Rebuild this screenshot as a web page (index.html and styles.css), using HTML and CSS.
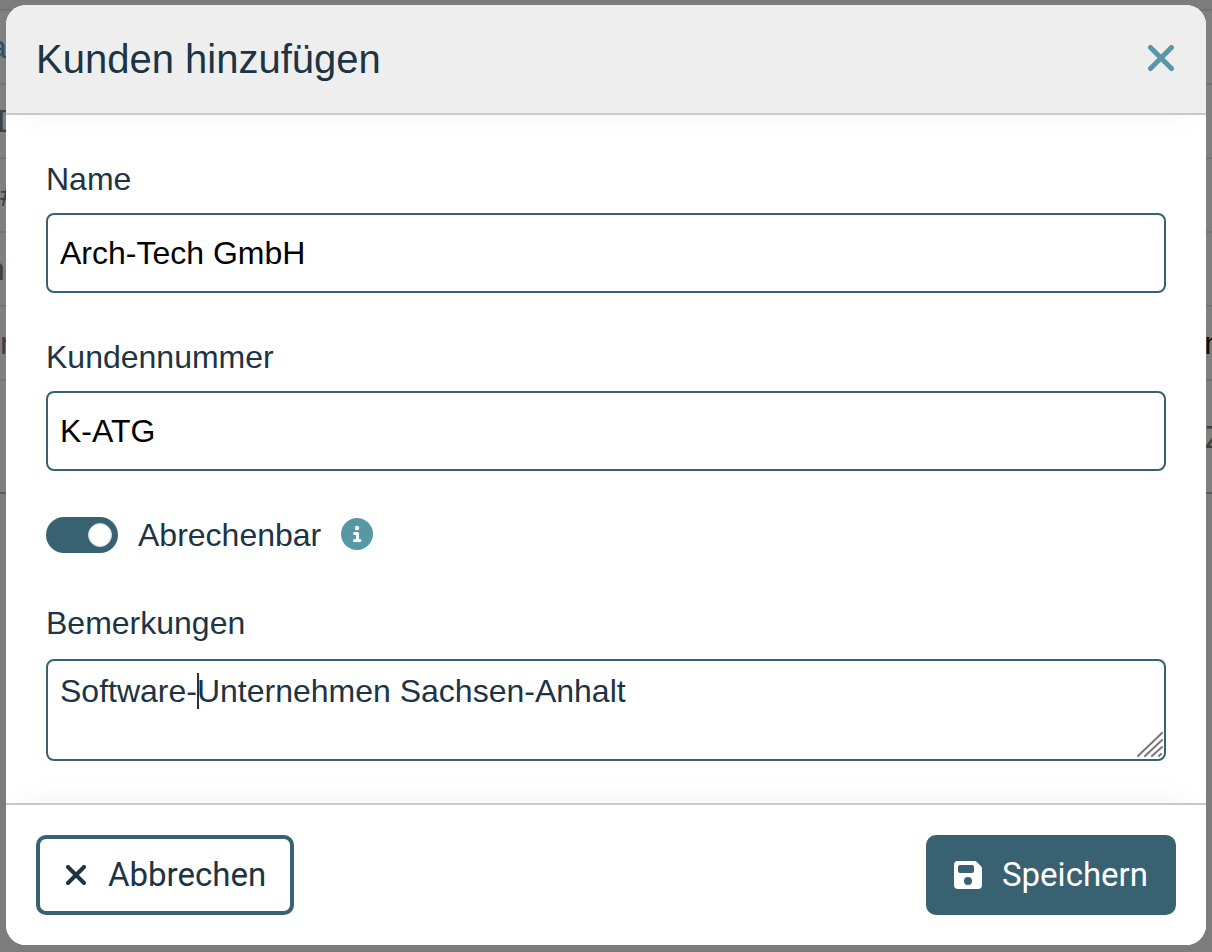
FILE: index.html
```html
<!DOCTYPE html>
<html lang="de">
<head>
<meta charset="utf-8">
<title>Kunden hinzufügen</title>
<link rel="stylesheet" href="styles.css">
</head>
<body>
<div class="page" aria-hidden="true">
  <div class="row row-accent"><span>a</span></div>
  <div class="row row-wide"><span>D</span></div>
  <div class="row"><span>#</span></div>
  <div class="row row-cut"><span>n</span></div>
  <div class="row row-dark"><span class="muted">r</span><span>n</span></div>
  <div class="row row-last"><span></span><span>Ze</span></div>
</div>
<div class="overlay">
  <form class="dialog" role="dialog" aria-labelledby="dialog-title">
    <header class="dialog-header">
      <h1 class="dialog-title" id="dialog-title">Kunden hinzufügen</h1>
      <button class="close" type="button" aria-label="Schließen">
        <svg class="close-icon" viewBox="0 0 30 30"><path d="M4.500 3.500 25.500 24.500M25.500 3.500 4.500 24.500"/></svg>
      </button>
    </header>
    <div class="dialog-body">
      <div class="field">
        <label for="name">Name</label>
        <input class="control" id="name" type="text" value="Arch-Tech GmbH">
      </div>
      <div class="field">
        <label for="number">Kundennummer</label>
        <input class="control" id="number" type="text" value="K-ATG">
      </div>
      <div class="switch-row">
        <input class="switch" id="billable" type="checkbox" role="switch" checked>
        <label for="billable">Abrechenbar</label>
        <svg class="info" viewBox="0 0 32 34" role="img" aria-label="Info"><circle cx="16" cy="16" r="16" fill="#5898a6"/><circle cx="16" cy="10" r="2.200" fill="#fff"/><path d="M13.500 15.500h3v7M13.500 22.500h5.500" fill="none" stroke="#fff" stroke-width="3" stroke-linecap="round" stroke-linejoin="round"/></svg>
      </div>
      <div class="field field-notes">
        <label for="notes">Bemerkungen</label>
        <div class="notes">
          <textarea class="control notes-text" id="notes">Software-Unternehmen Sachsen-Anhalt</textarea>
          <span class="caret"></span>
          <svg class="grip" viewBox="0 0 26 26"><path d="M1 24 25 1M8 24 25 8M15 24 25 15M22 24 24 22"/></svg>
        </div>
      </div>
    </div>
    <footer class="dialog-footer">
      <button class="button button-outline" type="button">
        <svg class="cancel-icon" viewBox="0 0 20 20"><path d="M2 2 18 18M18 2 2 18"/></svg>
        Abbrechen
      </button>
      <button class="button button-primary" type="submit">
        <svg class="save-icon" viewBox="0 0 28 28"><path fill="#fff" fill-rule="evenodd" d="M4 0h16.300a4 4 0 0 1 2.800 1.200l3.700 3.700A4 4 0 0 1 28 7.700V24a4 4 0 0 1-4 4H4a4 4 0 0 1-4-4V4a4 4 0 0 1 4-4ZM6 4a2 2 0 0 0-2 2v4a2 2 0 0 0 2 2h12a2 2 0 0 0 2-2V6a2 2 0 0 0-2-2ZM14 16a4 4 0 1 0 0 8 4 4 0 0 0 0-8Z"/></svg>
        Speichern
      </button>
    </footer>
  </form>
</div>
</body>
</html>
```
FILE: styles.css
```css
*,
*::before {
  box-sizing: border-box;
}

body {
  margin: 0;
  min-height: 100vh;
  background: #7c7c7c;
  color: #1c3444;
  font: 32px/36px "Liberation Sans", Arial, sans-serif;
}

.page {
  position: absolute;
  inset: 0;
  padding-top: 9px;
  overflow: hidden;
}

.row {
  display: flex;
  justify-content: space-between;
  align-items: center;
  height: 74px;
  border-top: 2px solid #737373;
  background: #808080;
  color: #3f3f3f;
}

.row-accent {
  color: #2c5360;
  margin-left: -11px;
}

.row-wide {
  margin-left: -3px;
}

.row-cut {
  margin-left: -13px;
}

.row-dark {
  color: #111;
  margin-right: -10px;
}

.muted {
  color: #3f3f3f;
}

.row-last {
  height: 115px;
  border-bottom: 2px solid #5c5c5c;
  margin-right: -30px;
}

.overlay {
  position: relative;
  display: flex;
  min-height: 100vh;
  padding: 5px 6px 7px;
}

.dialog {
  display: flex;
  flex-direction: column;
  flex: 1;
  overflow: hidden;
  border-radius: 20px;
  background: #fff;
}

.dialog-header,
.dialog-footer {
  position: relative;
  display: flex;
  align-items: center;
  justify-content: space-between;
  padding: 30px;
}

.dialog-header {
  border-bottom: 2px solid #c8c8c8;
  background: #eee;
  box-shadow: 0 20px 30px -20px rgba(0, 0, 0, 0.06);
}

.dialog-title {
  margin: 0;
  font-size: 40px;
  line-height: 48px;
  font-weight: 400;
}

.close {
  display: flex;
  padding: 0;
  border: 0;
  background: none;
}

.close-icon {
  width: 30px;
  height: 30px;
  fill: none;
  stroke: #5898a6;
  stroke-width: 5;
  stroke-linecap: round;
}

.dialog-body {
  display: flex;
  flex: 1;
  flex-direction: column;
  gap: 46px;
  padding: 46px 40px 42px;
}

.field {
  display: flex;
  flex-direction: column;
  gap: 16px;
}

.field-notes {
  flex: 1;
  gap: 18px;
}

.control {
  width: 100%;
  height: 80px;
  padding: 12px;
  border: 2px solid #386272;
  border-radius: 8px;
  outline: 0;
  background: #fff;
  color: #000;
  font: inherit;
}

.switch-row {
  display: flex;
  align-items: center;
  gap: 20px;
  margin-bottom: 6px;
}

.switch {
  appearance: none;
  display: flex;
  align-items: center;
  width: 72px;
  height: 36px;
  margin: 0;
  padding: 6px;
  border-radius: 18px;
  background: #386272;
}

.switch::before {
  content: "";
  width: 24px;
  height: 24px;
  border: 1px solid #ccd5dd;
  border-radius: 50%;
  background: #fff;
}

.switch:checked {
  justify-content: flex-end;
}

.info {
  width: 32px;
  height: 34px;
}

.notes {
  position: relative;
  display: flex;
  flex: 1;
}

.notes-text {
  height: auto;
  min-height: 102px;
  resize: none;
  color: #1c3444;
}

.caret {
  position: absolute;
  top: 14px;
  left: 151px;
  width: 2px;
  height: 36px;
  background: #1c3444;
}

.grip {
  position: absolute;
  right: 3px;
  bottom: 3px;
  width: 26px;
  height: 26px;
  fill: none;
  stroke: #777;
  stroke-width: 2;
  stroke-linecap: round;
}

.dialog-footer {
  border-top: 2px solid #c8c8c8;
  background: #fff;
  box-shadow: 0 -20px 30px -20px rgba(0, 0, 0, 0.06);
}

.button {
  display: flex;
  align-items: center;
  gap: 20px;
  height: 80px;
  padding: 0 24px;
  border: 4px solid #386272;
  border-radius: 10px;
  background: #fff;
  color: #1c3444;
  font: 33px/36px Roboto, sans-serif;
}

.button-primary {
  background: #386272;
  color: #fff;
}

.cancel-icon {
  width: 24px;
  height: 20px;
  fill: none;
  stroke: #1c3444;
  stroke-width: 4;
  stroke-linecap: round;
}

.save-icon {
  width: 28px;
  height: 28px;
}
```
